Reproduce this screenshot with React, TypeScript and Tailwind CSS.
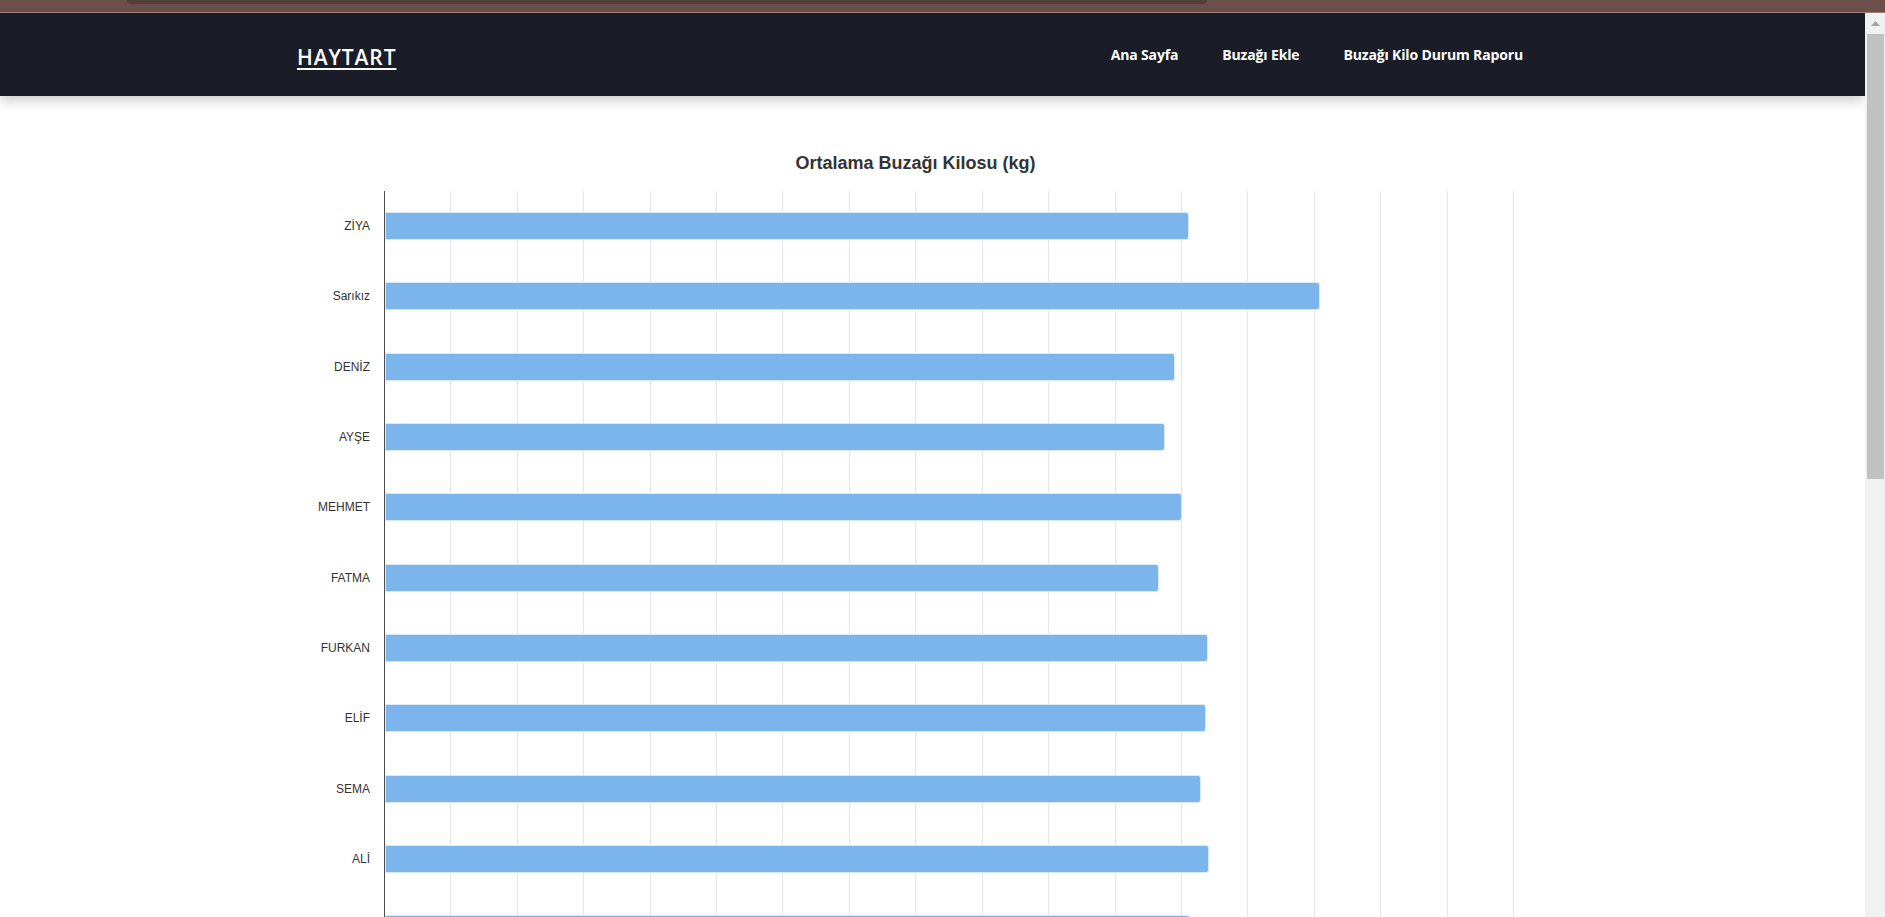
import React from 'react';

type Calf = { name: string; width: number };

// bar lengths in px, measured against a 1129px plot
const calves: Calf[] = [
    { name: 'ZİYA', width: 804 },
    { name: 'Sarıkız', width: 935 },
    { name: 'DENİZ', width: 790 },
    { name: 'AYŞE', width: 780 },
    { name: 'MEHMET', width: 797 },
    { name: 'FATMA', width: 774 },
    { name: 'FURKAN', width: 823 },
    { name: 'ELİF', width: 821 },
    { name: 'SEMA', width: 816 },
    { name: 'ALİ', width: 824 },
    { name: '', width: 805 },
];

const PLOT_W = 1129;
const TICKS = 17;

const navLinks = ['Ana Sayfa', 'Buzağı Ekle', 'Buzağı Kilo Durum Raporu'];

const Header: React.FC = () => (
    <header className="relative z-10 h-[83px] bg-[#1a1d27] shadow-[0_4px_12px_rgba(0,0,0,0.22)] flex items-center justify-between pl-[297px] pr-[342px] font-['Open_Sans',sans-serif] text-white">
        <a href="#" className="pt-[5px] text-[21px] font-semibold tracking-[0.9px] underline decoration-[2px] underline-offset-[3px] leading-[28px]">
            HAYTART
        </a>
        <nav className="flex items-center gap-[44px] text-[14px] font-bold tracking-[-0.15px]">
            {navLinks.map((link) => (
                <a key={link} href="#" className="whitespace-nowrap">
                    {link}
                </a>
            ))}
        </nav>
    </header>
);

const GridLines: React.FC = () => (
    <svg className="absolute inset-0 h-full w-full" preserveAspectRatio="none">
        {Array.from({ length: TICKS }, (_, i) => {
            const x = Math.round(((i + 1) * PLOT_W) / TICKS) - 0.5;
            return <line key={i} x1={x} x2={x} y1="0" y2="100%" stroke="#e6e6e6" strokeWidth="1" />;
        })}
    </svg>
);

const BarChart: React.FC = () => (
    <section className="mt-[56px] ml-[297px] w-[1237px] font-['Liberation_Sans',Arial,sans-serif]">
        <h2 className="h-[22px] leading-[22px] text-center text-[18px] font-bold text-[#333333]">
            Ortalama Buzağı Kilosu (kg)
        </h2>
        <div className="mt-[17px] flex">
            <div className="w-[87px] shrink-0">
                {calves.map((c, i) => (
                    <div key={i} className="h-[70.3px] flex items-center justify-end pr-[14px] text-[12px] text-[#333333]">
                        {c.name}
                    </div>
                ))}
            </div>
            <div className="relative w-[1130px] border-l border-[#4d4d4d]">
                <GridLines />
                {calves.map((c, i) => (
                    <div key={i} className="relative h-[70.3px] flex items-center">
                        <div
                            className="h-[28px] bg-[#7cb5ec] border border-white/70 rounded-r-[3px]"
                            style={{ width: c.width }}
                        />
                    </div>
                ))}
            </div>
        </div>
    </section>
);

const Scrollbar: React.FC = () => (
    <div className="w-[20px] shrink-0 bg-[#f1f1f1] flex flex-col">
        <div className="h-[21px] flex items-center justify-center">
            <svg width="9" height="5" viewBox="0 0 9 5">
                <path d="M4.5 0 L9 5 L0 5 Z" fill="#a3a3a3" />
            </svg>
        </div>
        <div className="ml-[2px] w-[17px] h-[445px] bg-[#c1c1c1]" />
    </div>
);

export default function App() {
    return (
        <div className="h-[917px] w-full overflow-hidden flex flex-col bg-white">
            {/* browser chrome strip above the page */}
            <div className="h-[12px] bg-[#6c4f4b] shrink-0">
                <div className="ml-[127px] w-[1080px] h-[4px] bg-[#553d3c] rounded-b-[10px]" />
            </div>
            <div className="h-px bg-[#9e7f78] shrink-0" />
            <div className="flex flex-1 min-h-0">
                <main className="flex-1 min-w-0 overflow-hidden bg-white">
                    <Header />
                    <BarChart />
                </main>
                <Scrollbar />
            </div>
        </div>
    );
}
